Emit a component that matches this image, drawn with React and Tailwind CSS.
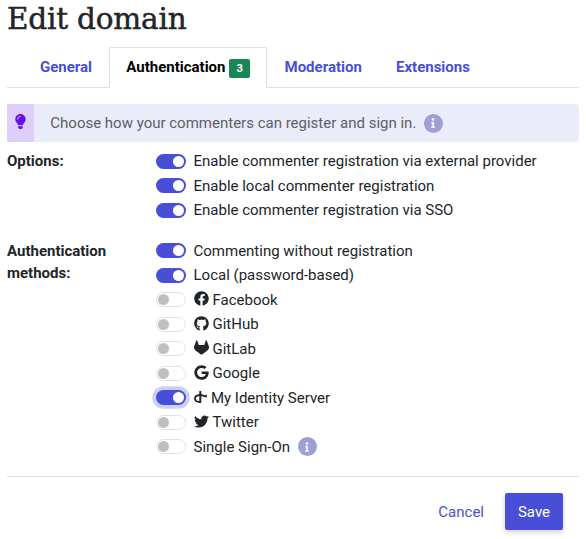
import { FaFacebook, FaGithub, FaGoogle, FaTwitter, FaLightbulb, FaInfo } from 'react-icons/fa';
import { FaGitlab } from 'react-icons/fa6';

function Switch({ on, focused }) {
  return (
    <span
      className={`mr-[7.5px] flex h-[15px] w-[30px] shrink-0 items-center rounded-full ${
        on ? 'justify-end bg-[#484fd6] px-[2px]' : 'border border-[#dee2e6] bg-white px-[1px]'
      } ${focused ? 'ring-[3.75px] ring-[#ccd0f5]' : ''}`}
    >
      <span className={`rounded-full ${on ? 'size-[11px] bg-white' : 'size-[11px] bg-[#bfbfbf]'}`} />
    </span>
  );
}

function InfoDot() {
  return (
    <span className="ml-[7.5px] inline-flex size-[19px] shrink-0 items-center justify-center rounded-full bg-[#9f9fd6] text-[#ecedf9]">
      <FaInfo size={10} />
    </span>
  );
}

function IdentityIcon() {
  return (
    <svg width="13" height="13" viewBox="0 0 13 13" className="mr-[4.4px] shrink-0" fill="none" stroke="currentColor">
      <path d="M6.3 0V12" strokeWidth="2" />
      <path d="M6 4C2.7 4.2 1 5.6 1 7.5C1 9.5 3 10.9 6 11.1" strokeWidth="1.8" />
      <path d="M7 4C8.6 4.1 9.5 4.6 10.6 5.2" strokeWidth="1.8" />
      <path d="M12.6 3.2L13 6.6L8.9 5.8Z" fill="currentColor" stroke="none" />
    </svg>
  );
}

function Row({ on, focused, icon, info, children }) {
  return (
    <div className="flex h-[24.5px] items-center whitespace-nowrap">
      <Switch on={on} focused={focused} />
      {icon}
      <span>{children}</span>
      {info && <InfoDot />}
    </div>
  );
}

const brand = 'mr-1 shrink-0 relative -top-px';

export default function App() {
  return (
    <div className="h-[539px] w-[586px] overflow-hidden bg-white pl-[7px] pr-[7px] font-[Roboto,sans-serif] text-[15px] leading-[22px] text-[#212529]">
      <h1 className="h-[47px] whitespace-nowrap pt-px font-['DejaVu_Serif',serif] text-[29.5px] leading-[36px] tracking-[-0.2px] [-webkit-text-stroke:0.5px_#212529]">
        Edit domain
      </h1>

      <nav className="flex h-[41px] font-bold text-[#484fd6]">
        <div className="w-4 border-b border-[#dee2e6]" />
        <div className="w-[86px] border-b border-[#dee2e6] pl-[17px] pt-[9px]">General</div>
        <div className="flex w-[158px] items-start rounded-t-[2px] border border-b-0 border-[#dee2e6] pl-[16.3px] pt-2 text-black">
          <span>Authentication</span>
          <span className="ml-[3.7px] mt-[3px] flex h-[19px] w-[21px] items-center justify-center rounded-[2px] bg-[#198754] text-[11.25px] text-white">
            3
          </span>
        </div>
        <div className="w-[112px] border-b border-[#dee2e6] pl-[17.5px] pt-[9px]">Moderation</div>
        <div className="flex-1 border-b border-[#dee2e6] pl-[17px] pt-[9px]">Extensions</div>
      </nav>

      <div className="mt-4 flex h-[38px] overflow-hidden rounded-r-[4px] bg-[#eaecf9]">
        <div className="flex w-[27px] items-start justify-center bg-[#dfcdfa] pt-[10px] text-[#6610f2]">
          <FaLightbulb size={15} />
        </div>
        <div className="flex items-center pl-[16.3px] text-[#5c6066]">
          <span>Choose how your commenters can register and sign in.</span>
          <InfoDot />
        </div>
      </div>

      <section className="mt-[7px] flex">
        <div className="w-[149px] pt-px font-bold">Options:</div>
        <div>
          <Row on>Enable commenter registration via external provider</Row>
          <Row on>Enable local commenter registration</Row>
          <Row on>Enable commenter registration via SSO</Row>
        </div>
      </section>

      <section className="mt-4 flex">
        <div className="w-[149px] pt-px font-bold">
          Authentication
          <br />
          methods:
        </div>
        <div>
          <Row on>Commenting without registration</Row>
          <Row on>Local (password-based)</Row>
          <Row icon={<FaFacebook size={15} className={brand} />}>Facebook</Row>
          <Row icon={<FaGithub size={15} className={brand} />}>GitHub</Row>
          <Row icon={<FaGitlab size={15} className={brand} />}>GitLab</Row>
          <Row icon={<FaGoogle size={15} className={brand} />}>Google</Row>
          <Row on focused icon={<IdentityIcon />}>My Identity Server</Row>
          <Row icon={<FaTwitter size={15} className={brand} />}>Twitter</Row>
          <Row info>Single Sign-On</Row>
        </div>
      </section>

      <footer className="mt-[17px] flex items-start justify-end border-t border-[#dee2e6] pr-4 pt-4">
        <button className="mr-[21px] h-[37px] text-[#484fd6]">Cancel</button>
        <button className="h-[37px] w-[58px] rounded-[2px] bg-[#484fd6] text-white shadow-[0_2px_5px_rgba(0,0,0,0.18)]">
          Save
        </button>
      </footer>
    </div>
  );
}
